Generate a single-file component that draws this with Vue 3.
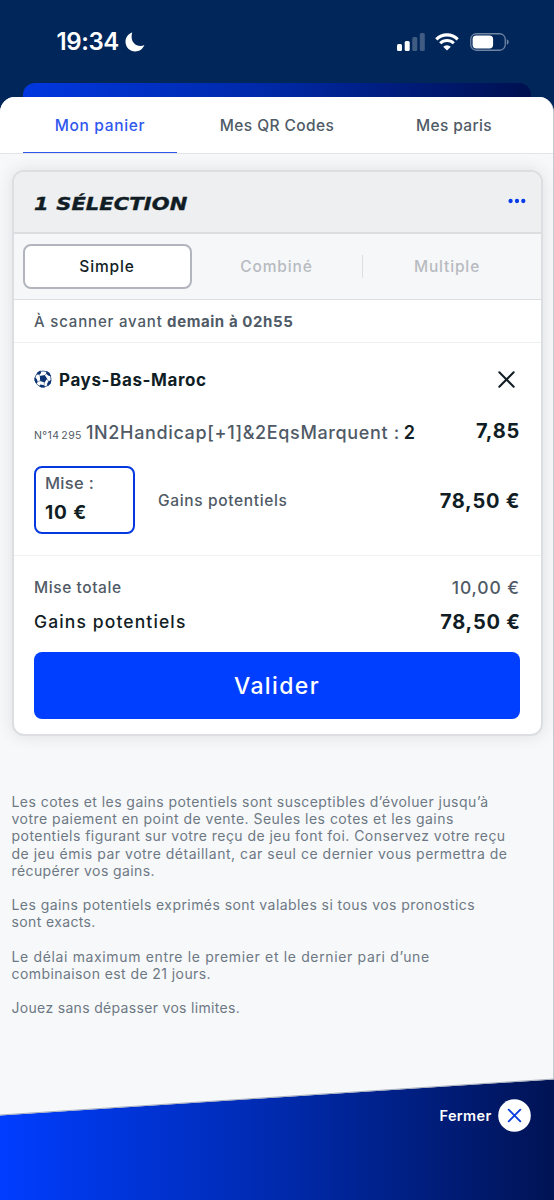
<script setup>
const tabs = [
  { label: 'Mon panier', active: true, cls: 't1' },
  { label: 'Mes QR Codes', active: false, cls: 't2' },
  { label: 'Mes paris', active: false, cls: 't3' },
]

// Each line carries its own tracking, in pixels.
const legal = [
  [
    ['Les cotes et les gains potentiels sont susceptibles d’évoluer jusqu’à', 0.445],
    ['votre paiement en point de vente. Seules les cotes et les gains', 0.475],
    ['potentiels figurant sur votre reçu de jeu font foi. Conservez votre reçu', 0.455],
    ['de jeu émis par votre détaillant, car seul ce dernier vous permettra de', 0.51],
    ['récupérer vos gains.', 0.4],
  ],
  [
    ['Les gains potentiels exprimés sont valables si tous vos pronostics', 0.43],
    ['sont exacts.', 0.37],
  ],
  [
    ['Le délai maximum entre le premier et le dernier pari d’une', 0.645],
    ['combinaison est de 21 jours.', 0.42],
  ],
  [['Jouez sans dépasser vos limites.', 0.32]],
]
</script>

<template>
  <div class="screen">
    <header class="status">
      <div class="clock">
        <span class="time">19:34</span>
        <svg class="moon" width="20" height="20" viewBox="0 0 20 20">
          <path d="M7.2.6C3.300 1.900.5 5.500.5 9.800.5 15.200 4.800 19.500 10.200 19.500c4.300 0 7.800-2.600 9.200-6.400-1.200.6-2.600.9-4 .9-5 0-8.800-3.900-8.800-8.900 0-1.600.2-3.100.6-4.500z" fill="#fff" />
        </svg>
      </div>
      <div class="indicators">
        <svg width="28" height="18" viewBox="0 0 28 18" fill="#fff">
          <rect x="0" y="11" width="5" height="7" rx="1.500" />
          <rect x="7.700" y="8" width="5" height="10" rx="1.500" />
          <rect x="15.300" y="4" width="5" height="14" rx="1.500" opacity=".25" />
          <rect x="22.800" y="0" width="5" height="18" rx="1.500" opacity=".25" />
        </svg>
        <svg class="wifi" width="24" height="18" viewBox="0 0 24 18" fill="none" stroke="#fff">
          <path d="M1.300 6.300A15.300 15.300 0 0 1 22.700 6.300" stroke-width="3.200" />
          <path d="M5.200 10.200A9.700 9.700 0 0 1 18.800 10.200" stroke-width="3" />
          <path d="M12 17.600 8.200 13.800A5.400 5.400 0 0 1 15.800 13.800Z" fill="#fff" stroke="none" />
        </svg>
        <svg class="battery" width="39" height="18" viewBox="0 0 39 18">
          <rect x=".75" y=".75" width="34.500" height="16.500" rx="5.500" fill="none" stroke="#7083a3" stroke-width="1.300" />
          <rect x="2.600" y="2.600" width="20.500" height="12.800" rx="3.700" fill="#fff" />
          <path d="M36.800 6.200c1.200.5 1.900 1.500 1.900 2.800s-.7 2.300-1.900 2.800z" fill="#7083a3" />
        </svg>
      </div>
      <div class="behind"></div>
    </header>

    <main class="sheet">
      <nav class="tabs">
        <a v-for="t in tabs" :key="t.label" class="tab" :class="[t.cls, { active: t.active }]">{{ t.label }}</a>
      </nav>

      <section class="card">
        <div class="card-head">
          <h1>1 SÉLECTION</h1>
          <svg width="18" height="6" viewBox="0 0 18 6" fill="#063bea">
            <circle cx="2.600" cy="3" r="2.150" /><circle cx="9" cy="3" r="2.150" /><circle cx="15.300" cy="3" r="2.150" />
          </svg>
        </div>
        <div class="modes">
          <span class="mode selected">Simple</span>
          <span class="mode">Combiné</span>
          <span class="mode last">Multiple</span>
        </div>
        <div class="scan"><span>À scanner avant</span><b>demain à 02h55</b></div>

        <div class="bet">
          <div class="match">
            <svg width="18" height="18" viewBox="0 0 18 18">
              <circle cx="9" cy="9" r="8" fill="#fff" stroke="#3b5c8f" stroke-width=".9" />
              <g fill="#0b3272">
                <path d="M5.800 6.100 10.700 4.900 13.200 8.800 10.500 12.400 6.200 11.100Z" />
                <path d="M3.500 2.200 6.300.5 7.200 2.900 5.300 4.700 2.500 4.500Z" />
                <path d="M12.400.8 15.500 2.800 17.200 6.200 14.500 5.800 12.100 3.700Z" />
                <path d="M.4 7.300 2.800 9.100 3.800 12.300 2.200 13.500.5 10.500Z" />
                <path d="M6.400 14.600 10.300 15.200 11 17.500 7.100 17.500 5.200 16.200Z" />
                <path d="M14.400 11.200 17.500 9.900 16.700 13.500 13.700 16.400 13 14Z" />
              </g>
              <path d="M10.500 5.300 12.300 3.700M12.900 8.800 14.800 11.500M10.300 12 10.200 15.200M6.500 10.800 3.500 11.500M6.200 6.300 5.300 4.400" stroke="#3b5c8f" stroke-width=".6" />
            </svg>
            <b>Pays-Bas-Maroc</b>
            <svg class="remove" width="17" height="17" viewBox="0 0 17 17" fill="none" stroke="#111d24" stroke-width="2" stroke-linecap="round">
              <path d="M1.300 1.300 15.700 15.700M15.700 1.300 1.300 15.700" />
            </svg>
          </div>
          <div class="market">
            <small>N°14<i></i>295</small>
            <span class="name">1N2Handicap[+1]&amp;2EqsMarquent :</span>
            <span class="pick">2</span>
            <b class="odds">7,85</b>
          </div>
          <div class="stake-row">
            <label class="stake"><span>Mise :</span><b>10 €</b></label>
            <span class="gain-label">Gains potentiels</span>
            <b class="amount">78,50 €</b>
          </div>
        </div>

        <div class="totals">
          <div class="line total"><span>Mise totale</span><span class="sum">10,00 €</span></div>
          <div class="line gains"><span>Gains potentiels</span><b class="amount">78,50 €</b></div>
          <button class="submit">Valider</button>
        </div>
      </section>

      <section class="legal">
        <p v-for="(p, i) in legal" :key="i">
          <span v-for="[text, tracking] in p" :key="text" :style="{ letterSpacing: tracking + 'px' }">{{ text }}</span>
        </p>
      </section>
    </main>

    <footer class="footer">
      <svg class="slope" width="554" height="124" viewBox="0 0 554 124">
        <defs>
          <linearGradient id="foot" x1="0" y1="0" x2="1" y2="0">
            <stop offset="0" stop-color="#003dff" />
            <stop offset=".5" stop-color="#002aae" />
            <stop offset="1" stop-color="#001354" />
          </linearGradient>
        </defs>
        <path d="M0 39.500 554 3.500V124H0Z" fill="url(#foot)" />
        <path d="M0 39 554 3" stroke="#a9b0bd" stroke-width="1" />
      </svg>
      <div class="close">
        <span>Fermer</span>
        <svg width="33" height="33" viewBox="0 0 33 33">
          <circle cx="16.500" cy="16.500" r="16.300" fill="#fff" />
          <path d="M10.700 10.700 22.300 22.300M22.300 10.700 10.700 22.300" stroke="#0b3fe0" stroke-width="1.900" stroke-linecap="round" />
        </svg>
      </div>
    </footer>
  </div>
</template>

<style>
body { background: #00265a; }
</style>

<style scoped>
.screen {
  width: 554px;
  height: 1200px;
  display: flex;
  flex-direction: column;
  position: relative;
  overflow: hidden;
  background: #00265a;
  color: #111d24;
  font-family: Inter, "Liberation Sans", sans-serif;
  box-sizing: border-box;
}
.screen *, .screen *::before, .screen *::after { box-sizing: border-box; }
svg { display: block; flex: none; }

.status {
  height: 97px;
  flex: none;
  display: flex;
  flex-wrap: wrap;
  align-content: space-between;
  justify-content: space-between;
  padding: 27px 23px 0;
}
.clock, .indicators { display: flex; align-items: center; height: 29px; }
.clock { padding-left: 33.500px; color: #fff; }
.time { font-size: 24px; font-weight: 600; letter-spacing: -0.400px; }
.moon { margin-left: 6px; }
.indicators { padding-right: 22px; }
.wifi { margin-left: 10px; }
.battery { margin-left: 11px; }
.behind {
  width: 508px;
  height: 14px;
  border-radius: 12px 12px 0 0;
  background: linear-gradient(90deg, #0037df, #0029a8 48%, #00104f);
}

.sheet {
  height: 1103px;
  flex: none;
  border-radius: 15px 15px 0 0;
  overflow: hidden;
  background: #f7f8fa;
  border-right: 1px solid #c7cacf;
}
.tabs {
  height: 57px;
  display: flex;
  gap: 23px;
  padding: 0 23px;
  background: #fff;
  border-bottom: 1px solid #e2e4e7;
}
.tab {
  width: 154px;
  flex: none;
  height: 56px;
  display: flex;
  align-items: center;
  justify-content: center;
  padding-top: 1px;
  font-size: 15.500px;
  font-weight: 500;
  color: #4f5b67;
  white-space: nowrap;
}
.t1 { letter-spacing: 0.680px; }
.t2 { letter-spacing: 0.400px; }
.t3 { letter-spacing: 0.350px; }
.tab.active { color: #2f58ee; border-bottom: 1.500px solid #2f58ee; padding-top: 2px; }

.card {
  width: 531px;
  margin: 16px 0 0 11.500px;
  height: 566px;
  border: 2px solid #dcdee1;
  border-radius: 12px;
  overflow: hidden;
  background: #fff;
  box-shadow: 0 0 16px rgba(40, 50, 60, 0.120);
}
.card-head {
  height: 62px;
  display: flex;
  align-items: center;
  justify-content: space-between;
  padding: 1px 14.500px 0 20px;
  background: #eeeff1;
  border-bottom: 2px solid #dcdee2;
}
.card-head svg { margin-top: -3px; }
h1 {
  margin: 3px 0 0;
  font: italic bold 17.500px/24px "DejaVu Sans", sans-serif;
  letter-spacing: 0.100px;
  transform: scaleX(1.200);
  transform-origin: left;
  -webkit-text-stroke: 0.400px #111d24;
}
.modes {
  height: 66px;
  display: flex;
  align-items: center;
  padding: 0 9px 1px;
  background: #f6f7f9;
  border-bottom: 1.500px solid #dcdee2;
}
.mode {
  width: 170px;
  height: 23px;
  flex: none;
  display: flex;
  align-items: center;
  justify-content: center;
  font-size: 15.500px;
  font-weight: 500;
  letter-spacing: 0.850px;
  color: #b7bbc0;
}
.mode.last { border-left: 1.500px solid #dcdee2; }
.mode.selected {
  width: 169px;
  height: 45px;
  border: 2px solid #b2b5bd;
  border-radius: 8px;
  background: #fff;
  color: #111d24;
}
.scan {
  height: 43px;
  display: flex;
  align-items: center;
  gap: 4.500px;
  padding: 1px 20.500px 0;
  font-size: 15px;
  font-weight: 500;
  color: #4f5a66;
  letter-spacing: 0.830px;
  border-bottom: 1.500px solid #eff0f2;
}
.scan b { font-weight: 700; letter-spacing: 0.580px; }

.bet { height: 213px; padding: 26px 21px 0 20.500px; border-bottom: 1.500px solid #f0f1f3; }
.match { display: flex; align-items: center; height: 20px; }
.match b { margin-left: 7px; font-size: 17px; letter-spacing: 0.600px; padding-top: 1px; }
.remove { margin-left: auto; margin-right: 5px; }
.market {
  display: flex;
  align-items: baseline;
  margin-top: 30px;
  height: 27px;
  line-height: 27px;
  color: #4f5a66;
  white-space: nowrap;
}
.market small { font-size: 10.500px; letter-spacing: 0.400px; width: 52px; }
.market small i { display: inline-block; width: 2px; }
.name { font-size: 18px; font-weight: 500; letter-spacing: 0.640px; }
.pick { margin-left: 4px; font-size: 18px; font-weight: 600; color: #111d24; }
.odds { margin-left: auto; font-size: 20px; letter-spacing: 0.700px; margin-right: -0.400px; color: #111d24; position: relative; top: -1px; }
.stake-row { display: flex; align-items: center; height: 68px; margin-top: 20px; }
.stake {
  width: 101px;
  height: 68px;
  padding: 4px 9px;
  border: 2px solid #0638e2;
  border-radius: 8px;
  display: flex;
  flex-direction: column;
}
.stake span { font-size: 16.500px; line-height: 22px; font-weight: 500; color: #4f5a66; letter-spacing: 0.300px; }
.stake b { font-size: 19px; line-height: 34px; letter-spacing: 0.900px; margin-top: 2px; }
.gain-label { margin-left: 23px; font-size: 15.500px; font-weight: 500; letter-spacing: 0.650px; color: #4f5a66; }
.amount { margin-left: auto; margin-right: -0.600px; font-size: 20px; letter-spacing: 0.750px; padding-top: 2px; }

.totals { padding: 14px 20.500px 0; }
.line { display: flex; align-items: center; justify-content: space-between; height: 34px; }
.total { font-size: 15.500px; font-weight: 500; letter-spacing: 0.580px; color: #4f5a66; }
.sum { font-size: 17.500px; letter-spacing: 0.900px; }
.gains > span { font-size: 17.500px; font-weight: 500; letter-spacing: 1.120px; }
.submit {
  display: block;
  width: 486px;
  height: 67px;
  margin-top: 14px;
  border: 0;
  border-radius: 8px;
  background: #003fff;
  color: #fff;
  font: 500 23px/69px Inter, sans-serif;
  letter-spacing: 1.400px;
  padding: 0;
}

.legal { padding: 57px 11.500px 0; color: #6d7884; font-size: 14px; line-height: 17.200px; }
.legal p { margin: 0 0 17.200px; }
.legal span { display: block; white-space: nowrap; }

.footer { position: absolute; left: 0; right: 0; bottom: 0; height: 124px; }
.slope { position: absolute; left: 0; top: 0; }
.close {
  position: relative;
  display: flex;
  align-items: center;
  justify-content: flex-end;
  gap: 6.500px;
  padding: 23px 23px 0 0;
  color: #fff;
  font-size: 14.500px;
  font-weight: 600;
  letter-spacing: 0.350px;
}
</style>
